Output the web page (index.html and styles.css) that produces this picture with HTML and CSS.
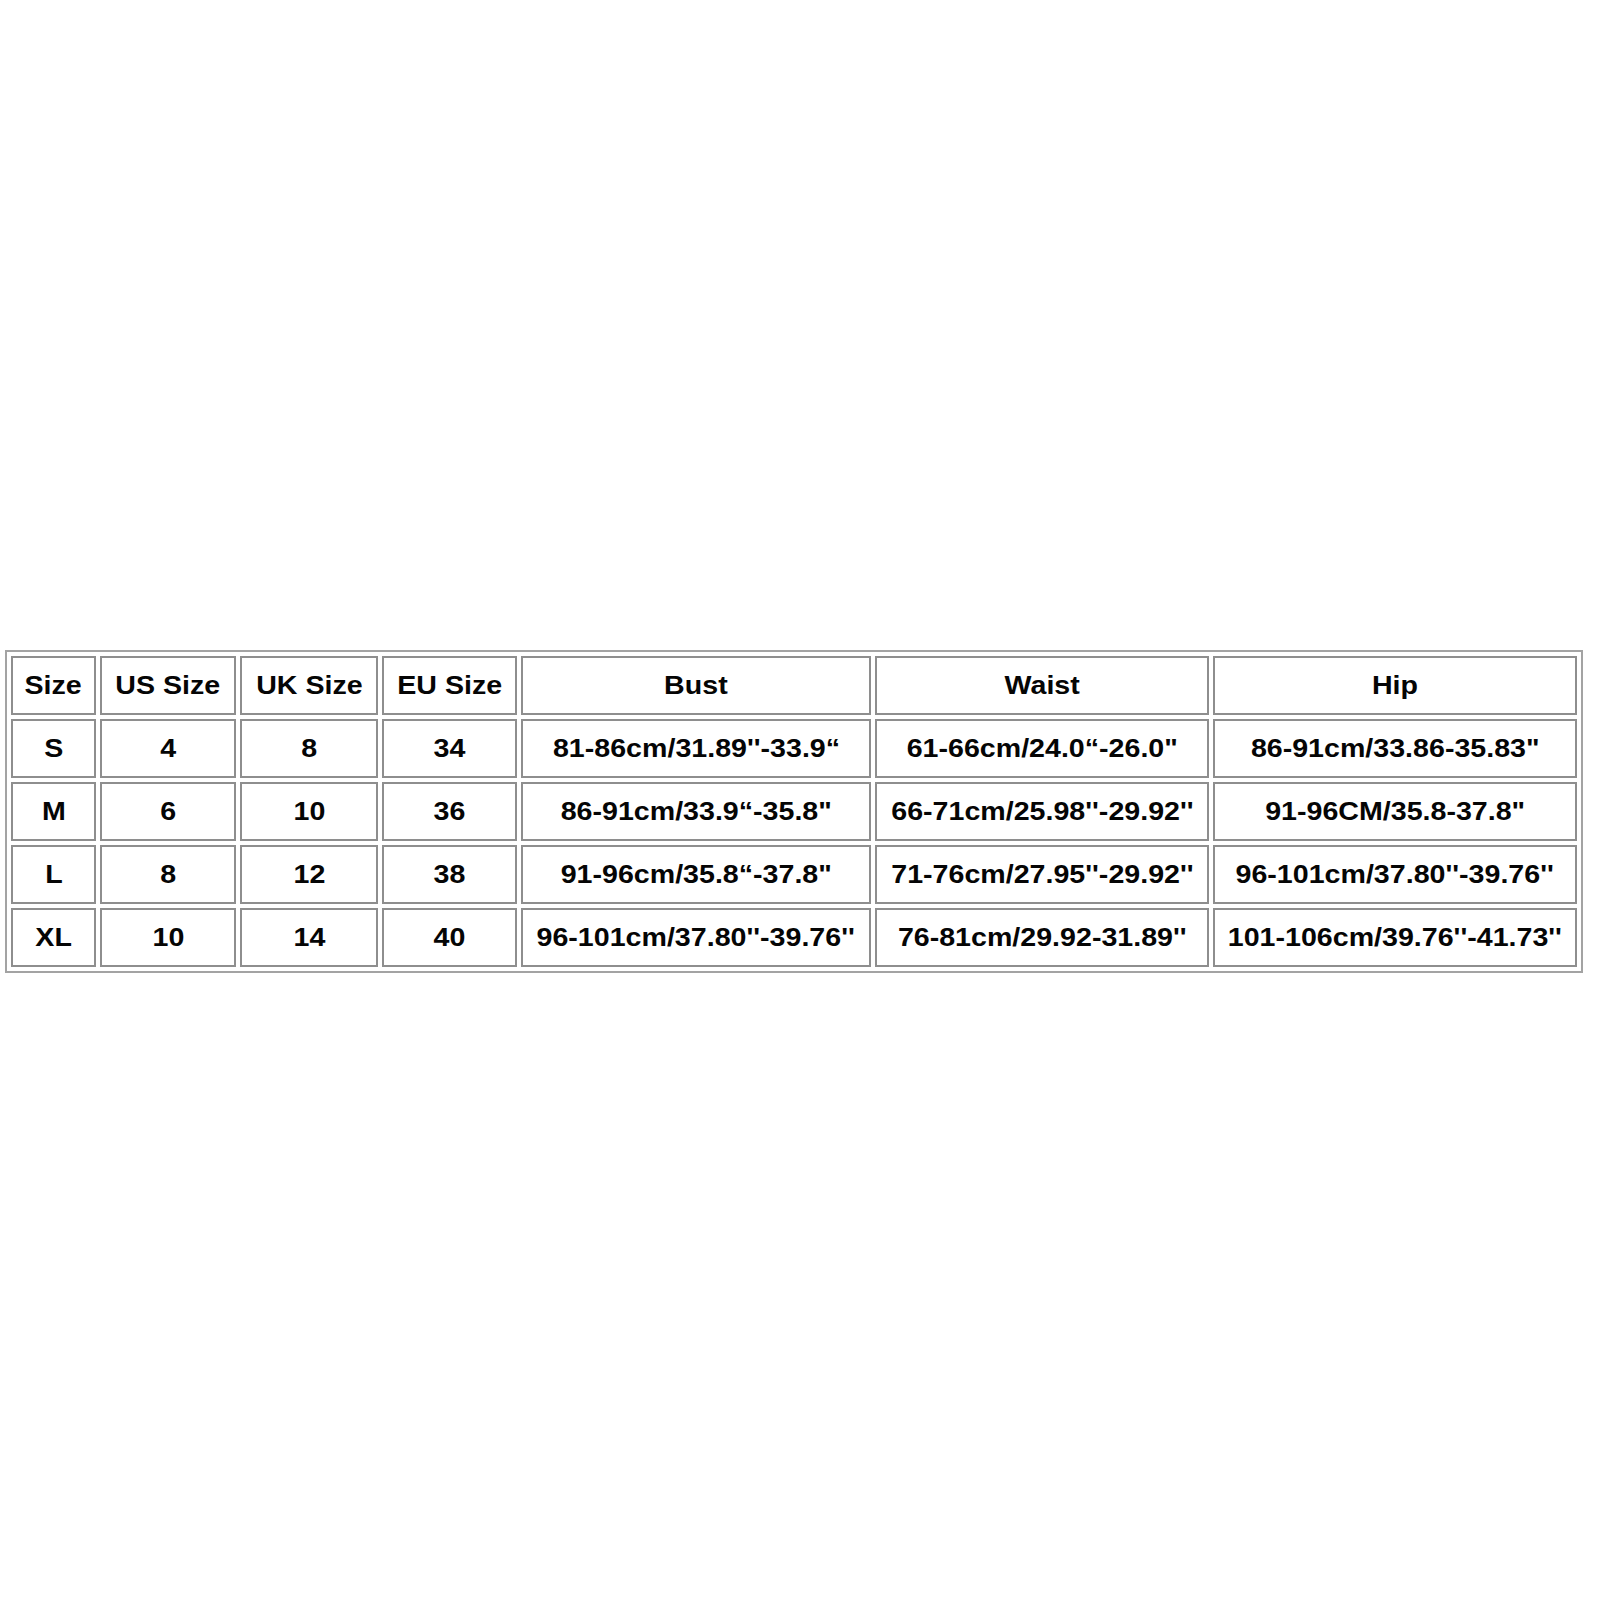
FILE: index.html
```html
<!DOCTYPE html>
<html lang="en">
<head>
<meta charset="utf-8">
<title>Size Chart</title>
<link rel="stylesheet" href="styles.css">
</head>
<body>
<div class="page">
  <table class="size-chart">
    <thead>
      <tr>
        <th class="c-size"><span class="t">Size</span></th>
        <th class="c-us"><span class="t">US Size</span></th>
        <th class="c-uk"><span class="t">UK Size</span></th>
        <th class="c-eu"><span class="t">EU Size</span></th>
        <th class="c-bust"><span class="t">Bust</span></th>
        <th class="c-waist"><span class="t">Waist</span></th>
        <th class="c-hip"><span class="t">Hip</span></th>
      </tr>
    </thead>
    <tbody>
      <tr>
        <td><span class="t">S</span></td>
        <td><span class="t">4</span></td>
        <td><span class="t">8</span></td>
        <td><span class="t">34</span></td>
        <td><span class="t">81-86cm/31.89''-33.9“</span></td>
        <td><span class="t">61-66cm/24.0“-26.0"</span></td>
        <td><span class="t">86-91cm/33.86-35.83"</span></td>
      </tr>
      <tr>
        <td><span class="t">M</span></td>
        <td><span class="t">6</span></td>
        <td><span class="t">10</span></td>
        <td><span class="t">36</span></td>
        <td><span class="t">86-91cm/33.9“-35.8"</span></td>
        <td><span class="t">66-71cm/25.98''-29.92''</span></td>
        <td><span class="t">91-96CM/35.8-37.8"</span></td>
      </tr>
      <tr>
        <td><span class="t">L</span></td>
        <td><span class="t">8</span></td>
        <td><span class="t">12</span></td>
        <td><span class="t">38</span></td>
        <td><span class="t">91-96cm/35.8“-37.8"</span></td>
        <td><span class="t">71-76cm/27.95''-29.92''</span></td>
        <td><span class="t">96-101cm/37.80''-39.76''</span></td>
      </tr>
      <tr>
        <td><span class="t">XL</span></td>
        <td><span class="t">10</span></td>
        <td><span class="t">14</span></td>
        <td><span class="t">40</span></td>
        <td><span class="t">96-101cm/37.80''-39.76''</span></td>
        <td><span class="t">76-81cm/29.92-31.89''</span></td>
        <td><span class="t">101-106cm/39.76''-41.73''</span></td>
      </tr>
    </tbody>
  </table>
</div>
</body>
</html>
```

FILE: styles.css
```css
html, body {
  margin: 0;
  padding: 0;
  background: #ffffff;
}

.page {
  padding: 650px 0 0 5px;
}

.size-chart {
  box-sizing: border-box;
  width: 1578px;
  table-layout: fixed;
  border-collapse: separate;
  border-spacing: 4px;
  border: 2px solid #a3a3a3;
  font-family: "Liberation Sans", Arial, sans-serif;
  font-size: 26px;
  font-weight: bold;
  color: #050505;
}

.size-chart th,
.size-chart td {
  box-sizing: border-box;
  height: 59px;
  padding: 0;
  border: 2px solid #8e8e8e;
  text-align: center;
  vertical-align: middle;
  font-weight: bold;
  white-space: nowrap;
}

.t {
  display: inline-block;
  transform: scaleX(1.1);
}

.c-size { width: 85px; }
.c-us { width: 136px; }
.c-uk { width: 138px; }
.c-eu { width: 135px; }
.c-bust { width: 350px; }
.c-waist { width: 334px; }
.c-hip { width: 364px; }
```
